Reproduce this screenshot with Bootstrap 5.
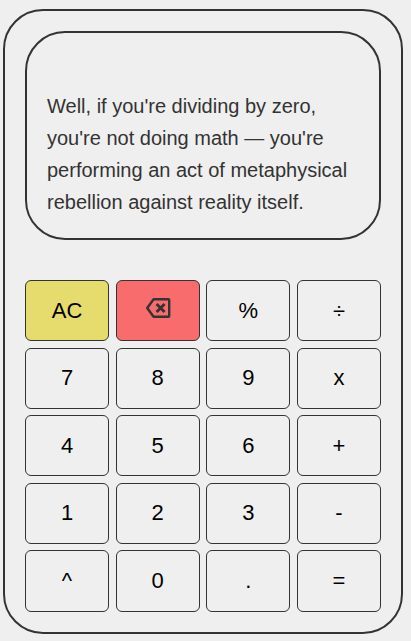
<!DOCTYPE html>
<html lang="en">
<head>
<meta charset="utf-8">
<meta name="viewport" content="width=device-width, initial-scale=1">
<title>Calculator</title>
<link href="https://cdn.jsdelivr.net/npm/bootstrap@5.3.0/dist/css/bootstrap.min.css" rel="stylesheet">
<style>
body { background: #efefef; color: #333; font-family: "Liberation Sans", Arial, sans-serif; }
.calc { width: 400px; height: 625px; margin: 9px 0 0 3px; padding: 20px; border: 2px solid #333; border-radius: 40px; }
.calc-display { height: 209px; padding: 0 20px 20px; border: 2px solid #333; border-radius: 40px; font-size: 20px; line-height: 32px; }
.calc-keys { display: grid; grid-template-columns: repeat(4, 84px); grid-auto-rows: 61.35px; row-gap: 6.21px; margin-top: 40px; }
.calc-keys .btn { --bs-btn-color: #000; --bs-btn-border-color: #333; --bs-btn-border-radius: 6px; --bs-btn-font-size: 22px; --bs-btn-line-height: 26px; --bs-btn-padding-x: 0; --bs-btn-padding-y: 0; }
.calc-keys .key-clear { --bs-btn-bg: #e6dc6d; }
.calc-keys .key-delete { --bs-btn-bg: #f86c6e; padding-bottom: 5px; }
</style>
</head>
<body>
<main class="calc d-flex flex-column">
  <div class="calc-display d-flex align-items-end"><p class="mb-0">Well, if you're dividing by zero, you're not doing math — you're performing an act of metaphysical rebellion against reality itself.</p></div>
  <div class="calc-keys justify-content-between">
    <button class="btn key-clear">AC</button>
    <button class="btn key-delete d-flex align-items-center justify-content-center" aria-label="Delete">
      <svg width="26" height="22" viewBox="0 0 26 22" fill="none" stroke="#333" stroke-width="2.4" stroke-linejoin="round"><path d="M8.6 2.2H23.4Q24.2 2.2 24.2 3V19Q24.2 19.8 23.4 19.8H8.6L2.2 11Z"/><path stroke-width="2.8" d="M11.6 7L19.6 15M19.6 7L11.6 15"/></svg>
    </button>
    <button class="btn">%</button>
    <button class="btn">÷</button>
    <button class="btn">7</button>
    <button class="btn">8</button>
    <button class="btn">9</button>
    <button class="btn">x</button>
    <button class="btn">4</button>
    <button class="btn">5</button>
    <button class="btn">6</button>
    <button class="btn">+</button>
    <button class="btn">1</button>
    <button class="btn">2</button>
    <button class="btn">3</button>
    <button class="btn">-</button>
    <button class="btn">^</button>
    <button class="btn">0</button>
    <button class="btn">.</button>
    <button class="btn">=</button>
  </div>
</main>
<script src="https://cdn.jsdelivr.net/npm/bootstrap@5.3.0/dist/js/bootstrap.bundle.min.js"></script>
</body>
</html>
